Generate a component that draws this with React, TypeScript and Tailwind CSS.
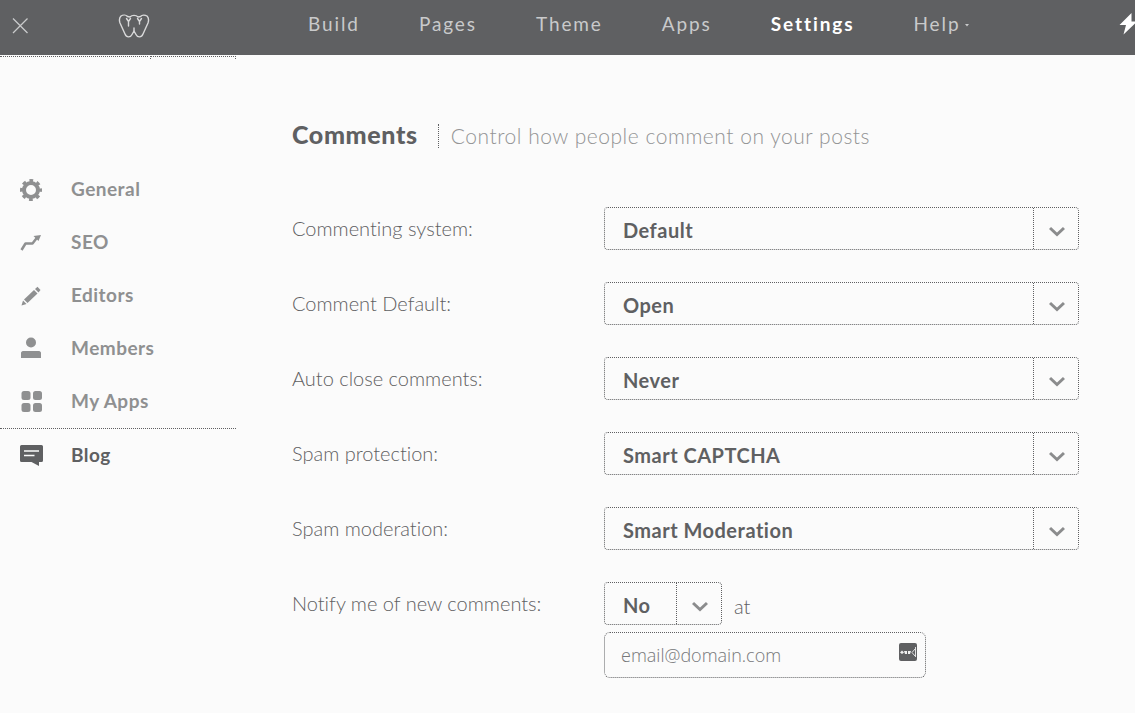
import { useState } from 'react';
import type { ReactNode } from 'react';

const navItems = ['Build', 'Pages', 'Theme', 'Apps', 'Settings', 'Help'];

function CloseIcon() {
  return (
    <svg className="size-4" viewBox="0 0 16 16" fill="none" stroke="currentColor" strokeWidth="1.3" aria-hidden="true">
      <path d="M1 .5 15.500 15M15.500 .5 1 15" />
    </svg>
  );
}

function Logo() {
  return (
    <svg className="h-6 w-8" viewBox="0 0 32 24" fill="none" stroke="#d9d9da" strokeWidth="1.400" strokeLinecap="round" strokeLinejoin="round" aria-hidden="true">
      <path d="M3 2C5 .7 8 .8 9.500 2.500L12 3C14 .8 18 .8 20 3L22.500 2.500C24 .8 27 .8 29 2 31 4 31 6 30 9L25 20C23.500 23.800 19.500 23.800 18 20.500L16 17 14 20.500C12.500 23.800 8.500 23.800 7 20L2 9C1 6 1 4 3 2Z" />
      <path d="M8.500 4.500 10.500 7.500V12M12.500 4.500 10.500 7.500M19.500 4.500 21.500 7.500V10M23.500 4.500 21.500 7.500M16 14V17" />
    </svg>
  );
}

function GearIcon() {
  return (
    <svg className="size-6" viewBox="0 0 24 24" fill="none" stroke="currentColor" aria-hidden="true">
      <circle cx="12" cy="12" r="7" strokeWidth="4" />
      <circle cx="12" cy="12" r="9.500" strokeWidth="3" strokeDasharray="3.730 3.730" strokeDashoffset="1.860" />
    </svg>
  );
}

function TrendIcon() {
  return (
    <svg className="size-6" viewBox="0 0 24 24" fill="none" stroke="currentColor" strokeWidth="2.500" strokeLinejoin="round" aria-hidden="true">
      <path d="M2.500 19 6.500 12.500 13.500 12.500 18.500 6" />
      <path d="M14.500 5 22 4 19.500 10Z" fill="currentColor" stroke="none" />
    </svg>
  );
}

function PencilIcon() {
  return (
    <svg className="size-6" viewBox="0 0 24 24" fill="currentColor" aria-hidden="true">
      <path d="M2.500 21.500 4 16.500 7.500 20Z" />
      <path d="M5 15.500 15 6 18.500 9.500 8.500 19Z" />
      <path d="M16 5 18.500 2.800 21.500 6 19.500 8.500Z" />
    </svg>
  );
}

function MembersIcon() {
  return (
    <svg className="size-6" viewBox="0 0 24 24" fill="currentColor" aria-hidden="true">
      <circle cx="12" cy="5.500" r="5" />
      <path d="M2 21V16c0-1 .8-2 2-2h16c1.200 0 2 1 2 2v5Z" />
    </svg>
  );
}

function AppsIcon() {
  return (
    <svg className="size-6" viewBox="0 0 24 24" fill="currentColor" aria-hidden="true">
      <rect x="2.500" y="1" width="9" height="9" rx="2.500" />
      <rect x="14" y="1" width="9" height="9" rx="2.500" />
      <rect x="2.500" y="13" width="9" height="9" rx="2.500" />
      <rect x="14" y="13" width="9" height="9" rx="2.500" />
    </svg>
  );
}

function BlogIcon() {
  return (
    <svg className="size-6" viewBox="0 0 24 24" aria-hidden="true">
      <path fill="currentColor" d="M2.500 2h20A1.500 1.500 0 0 1 24 3.500v14a1.500 1.500 0 0 1-1.500 1.500H20v4L12.500 19h-10A1.500 1.500 0 0 1 1 17.500v-14A1.500 1.500 0 0 1 2.500 2Z" />
      <path stroke="#fbfbfb" strokeWidth="1.500" d="M5 8h15M5 12.500h10.500" />
    </svg>
  );
}

const sections: { name: string; icon: ReactNode }[] = [
  { name: 'General', icon: <GearIcon /> },
  { name: 'SEO', icon: <TrendIcon /> },
  { name: 'Editors', icon: <PencilIcon /> },
  { name: 'Members', icon: <MembersIcon /> },
  { name: 'My Apps', icon: <AppsIcon /> },
  { name: 'Blog', icon: <BlogIcon /> },
];

const fields = [
  { id: 'system', label: 'Commenting system:', options: ['Default', 'Facebook', 'Disqus'] },
  { id: 'default', label: 'Comment Default:', options: ['Open', 'Closed', 'Require approval'] },
  { id: 'autoclose', label: 'Auto close comments:', options: ['Never', 'After 30 days', 'After 90 days'] },
  { id: 'spam', label: 'Spam protection:', options: ['Smart CAPTCHA', 'Always', 'Off'] },
  { id: 'moderation', label: 'Spam moderation:', options: ['Smart Moderation', 'Off'] },
];

function SelectBox({ id, options }: { id: string; options: string[] }) {
  return (
    <div className="grid h-[43px] grid-cols-[1fr_45px] rounded border border-dotted border-[#5f6062]">
      <select
        id={id}
        className="col-span-2 col-start-1 row-start-1 h-full w-full cursor-pointer appearance-none bg-transparent pt-0.5 pr-14 pl-[18px] text-xl font-bold tracking-wide outline-none"
      >
        {options.map((option) => (
          <option key={option}>{option}</option>
        ))}
      </select>
      <span className="pointer-events-none col-start-2 row-start-1 flex items-center justify-center border-l border-dotted border-[#5f6062] pt-1.5 pl-0.5">
        <svg className="h-3 w-4" viewBox="0 0 16 12" fill="none" stroke="#8b8c8d" strokeWidth="3" aria-hidden="true">
          <path d="M1 2 8 8.500 15 2" />
        </svg>
      </span>
    </div>
  );
}

export default function App() {
  const [email, setEmail] = useState('');
  return (
    <div className="min-h-screen bg-[#fbfbfb] font-['Lato',sans-serif] text-[#5f6062] [font-variant-ligatures:none]">
      <header className="flex h-[55px] items-center overflow-hidden bg-[#5f6062] pb-1 pl-3 text-[#c9cacb]">
        <button type="button" aria-label="Close" className="w-[106px] shrink-0">
          <CloseIcon />
        </button>
        <a href="#home" aria-label="Home" className="w-[190px] shrink-0">
          <Logo />
        </a>
        <nav className="flex gap-[59px] pb-0.5 text-[19px] tracking-widest whitespace-nowrap">
          {navItems.map((item) => (
            <a
              key={item}
              href={`#${item.toLowerCase()}`}
              className={item === 'Settings' ? 'font-bold text-white' : 'flex items-center gap-1'}
            >
              {item}
              {item === 'Help' && (
                <svg className="h-1 w-1.5" viewBox="0 0 6 4" fill="currentColor" aria-hidden="true">
                  <path d="M1 1h4L3 3.500Z" />
                </svg>
              )}
            </a>
          ))}
        </nav>
        <button type="button" aria-label="Upgrade" className="ml-auto shrink-0 pb-1 text-white">
          <svg className="h-[22px] w-4" viewBox="0 0 16 22" fill="currentColor" aria-hidden="true">
            <path d="M12.500 0 .5 12h6.500L4.500 21.500 18 8.500h-5.500Z" />
          </svg>
        </button>
      </header>

      <div className="flex">
        <aside className="w-[236px] shrink-0">
          <div className="mt-px mb-[104px] flex h-[3px] gap-0.5">
            <div className="flex-1 border-t border-dotted border-[#5f6062]" />
            <div className="w-[86px] border-x border-t border-dotted border-[#5f6062]" />
          </div>
          <nav className="flex flex-col">
            {sections.map(({ name, icon }) => (
              <a
                key={name}
                href={`#${name.toLowerCase().replace(' ', '-')}`}
                className={
                  name === 'Blog'
                    ? 'flex h-[53px] items-center gap-7 border-t border-dotted border-[#5f6062] pl-[19px] text-[19px] font-bold tracking-wide'
                    : 'flex h-[53px] items-center gap-7 pl-[19px] text-[19px] font-bold tracking-wide text-[#8f9091]'
                }
              >
                {icon}
                {name}
              </a>
            ))}
          </nav>
        </aside>

        <main className="min-w-0 flex-1 px-14 pt-[70px] pb-8">
          <div className="flex h-[22px] items-center">
            <h1 className="pb-0.5 text-[25px] font-black tracking-wide">Comments</h1>
            <p className="ml-5 border-l border-dotted border-[#5f6062] pl-3 text-[21px] leading-6 font-light tracking-wide text-[#939495]">
              Control how people comment on your posts
            </p>
          </div>

          <form className="mt-[60px] grid grid-cols-[312px_1fr] gap-y-8 text-xl">
            {fields.map(({ id, label, options }) => (
              <div key={id} className="col-span-2 grid grid-cols-subgrid items-center">
                <label htmlFor={id} className="pb-0.5 font-light">{label}</label>
                <SelectBox id={id} options={options} />
              </div>
            ))}
            <div className="col-span-2 grid grid-cols-subgrid">
              <label htmlFor="notify" className="h-[43px] font-light leading-[43px]">Notify me of new comments:</label>
              <div className="flex flex-col gap-[7px]">
                <div className="flex items-center gap-3">
                  <div className="w-[118px]">
                    <SelectBox id="notify" options={['No', 'Yes']} />
                  </div>
                  <label htmlFor="email" className="pt-1 font-light">at</label>
                </div>
                <div className="flex h-[46px] w-full max-w-[322px] items-center rounded-md border border-dotted border-[#5f6062] pr-2 pl-4">
                  <input
                    id="email"
                    type="email"
                    value={email}
                    onChange={(event) => setEmail(event.target.value)}
                    placeholder="email@domain.com"
                    className="min-w-0 flex-1 bg-transparent font-['Open_Sans',sans-serif] text-lg font-light outline-none placeholder:text-[#77787a]"
                  />
                  <button type="button" aria-label="Fill in address" className="pb-1.5">
                    <svg className="size-[18px]" viewBox="0 0 18 18" aria-hidden="true">
                      <rect width="18" height="18" rx="2" fill="#5f6062" />
                      <path d="M1 9.500 3 7.500 5 9.500 3 11ZM5 8h3v3H6ZM9 8h3l-1 3H9Z" fill="#f0f0f0" />
                      <path d="M16.500 4v10M13 9.500 16 6M13 9.500 16 13" stroke="#e0e0e1" fill="none" />
                    </svg>
                  </button>
                </div>
              </div>
            </div>
          </form>
        </main>
      </div>
    </div>
  );
}
